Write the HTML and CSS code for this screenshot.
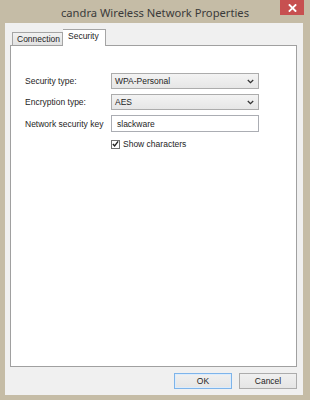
FILE: index.html
```html
<!DOCTYPE html>
<html>
<head>
<meta charset="utf-8">
<link rel="stylesheet" href="styles.css">
</head>
<body>
<div class="window">
  <div class="titlebar">
    <span></span>
    <div class="title">candra Wireless Network Properties</div>
    <div class="close">
      <svg width="9" height="8" viewBox="0 0 9 8"><path d="M1.5 1 L7.5 7 M7.5 1 L1.5 7" stroke="#fff" stroke-width="1.8" stroke-linecap="square"/></svg>
    </div>
  </div>
  <div class="client">
    <div class="tabs">
      <div class="tab">Connection</div>
      <div class="tab active">Security</div>
    </div>
    <div class="panel">
      <div class="form">
        <label class="lbl">Security type:</label>
        <div class="select"><span>WPA-Personal</span><svg width="7" height="5" viewBox="0 0 7 5"><path d="M0.8 1 L3.5 3.6 L6.2 1" fill="none" stroke="#333" stroke-width="1.3"/></svg></div>
        <label class="lbl">Encryption type:</label>
        <div class="select"><span>AES</span><svg width="7" height="5" viewBox="0 0 7 5"><path d="M0.8 1 L3.5 3.6 L6.2 1" fill="none" stroke="#333" stroke-width="1.3"/></svg></div>
        <label class="lbl">Network security key</label>
        <div class="input">slackware</div>
        <span></span>
        <div class="check"><span class="box"><svg width="8" height="8" viewBox="0 0 8 8"><path d="M1 4 L3 6.3 L7 1" fill="none" stroke="#222" stroke-width="1.6"/></svg></span><span>Show characters</span></div>
      </div>
    </div>
    <div class="buttons">
      <div class="btn default">OK</div>
      <div class="btn">Cancel</div>
    </div>
  </div>
</div>
</body>
</html>
```
FILE: styles.css
```css
html, body {
  margin: 0;
  padding: 0;
  background: #c5bca6;
}
body {
  width: 310px;
  height: 400px;
  overflow: hidden;
  font-family: "Liberation Sans", Arial, sans-serif;
  font-size: 8.5px;
  color: #1e1e1e;
}
.window {
  display: flex;
  flex-direction: column;
  height: 400px;
}
.titlebar {
  height: 23px;
  display: grid;
  grid-template-columns: 1fr auto 1fr;
  align-items: start;
}
.title {
  font-family: "Noto Sans", sans-serif;
  font-size: 11.2px;
  color: #3a3a3a;
  line-height: 23px;
  padding-top: 1px;
}
.close {
  justify-self: end;
  margin-right: 6px;
  width: 24px;
  height: 15px;
  background: #c75050;
  display: flex;
  align-items: center;
  justify-content: center;
}
.client {
  margin: 0 7px 5px 5px;
  height: 372px;
  background: #f0f0f0;
  padding: 6px 6px 0 5px;
  box-sizing: border-box;
  display: flex;
  flex-direction: column;
}
.tabs {
  display: flex;
  align-items: flex-end;
  padding-left: 2px;
  height: 16px;
  position: relative;
  z-index: 1;
}
.tab {
  height: 13px;
  box-sizing: border-box;
  border: 1px solid #a5a5a5;
  border-bottom: none;
  background: linear-gradient(#f1f1f1, #e2e2e2);
  padding: 0 4px;
  line-height: 13px;
  width: 51px;
  text-align: center;
}
.tab.active {
  height: 17px;
  margin-bottom: -1px;
  background: #fff;
  border-left: none;
  width: 43px;
  line-height: 13px;
  text-align: left;
  padding-left: 5px;
}
.panel {
  height: 322px;
  box-sizing: border-box;
  background: #fff;
  border: 1px solid #a0a0a0;
  padding: 27px 0 0 14px;
}
.form {
  display: grid;
  grid-template-columns: 86px 148px;
  grid-template-rows: 16px 16px 17px 9px;
  row-gap: 5px;
  align-items: center;
}
.form > .check { margin-top: 5px; }
.lbl {
  color: #1e1e1e;
}
.select {
  height: 16px;
  box-sizing: border-box;
  border: 1px solid #acacac;
  background: linear-gradient(#f3f3f3, #e6e6e6);
  display: flex;
  align-items: center;
  justify-content: space-between;
  padding: 0 4px 0 3px;
}
.input {
  height: 17px;
  box-sizing: border-box;
  border: 1px solid #abadb3;
  background: #fff;
  display: flex;
  align-items: center;
  padding-left: 5px;
}
.check {
  display: flex;
  align-items: center;
  gap: 3px;
}
.box {
  width: 9px;
  height: 9px;
  box-sizing: border-box;
  border: 1px solid #707070;
  background: #fff;
  display: flex;
  align-items: center;
  justify-content: center;
}
.buttons {
  display: flex;
  justify-content: flex-end;
  gap: 7px;
  margin-top: 6px;
}
.btn {
  width: 58px;
  height: 16px;
  box-sizing: border-box;
  border: 1px solid #acacac;
  background: linear-gradient(#f0f0f0, #e5e5e5);
  display: flex;
  align-items: center;
  justify-content: center;
}
.btn.default {
  border-color: #7eb4ea;
  box-shadow: inset 0 0 0 1px #dcecfc;
}
```
